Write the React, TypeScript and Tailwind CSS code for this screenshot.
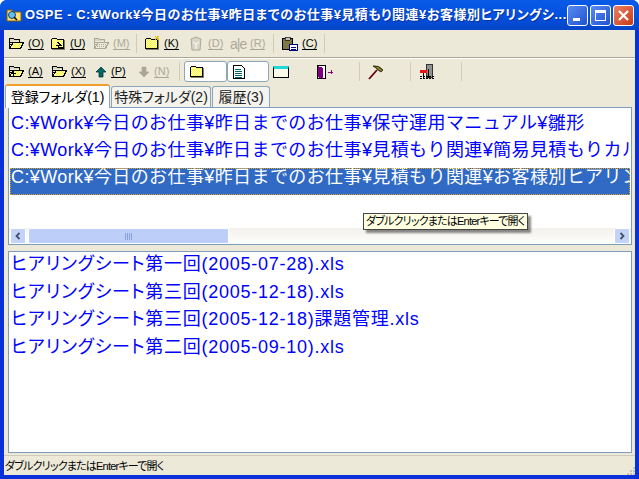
const jp = "font-['Liberation_Sans','Noto_Sans_CJK_JP',sans-serif] [font-feature-settings:'palt']";

function Dither() {
  return (
    <defs>
      <pattern id="dither" width="2" height="2" patternUnits="userSpaceOnUse">
        <rect width="2" height="2" fill="#ffff00" />
        <rect width="1" height="1" fill="#ffffff" />
        <rect x="1" y="1" width="1" height="1" fill="#ffffff" />
      </pattern>
      <pattern id="ditherDim" width="2" height="2" patternUnits="userSpaceOnUse">
        <rect width="2" height="2" fill="#ece9d8" />
        <rect width="1" height="1" fill="#aca899" />
      </pattern>
    </defs>
  );
}

function Folder({ open = false, dim = false, extra }: { open?: boolean; dim?: boolean; extra?: "up" | "new" | "plus" }) {
  const stroke = dim ? "#aca899" : "#000";
  const fill = dim ? "url(#ditherDim)" : "url(#dither)";
  return (
    <svg width="16" height="15" viewBox="0 0 16 15" shapeRendering="crispEdges" className="shrink-0">
      <Dither />
      {open ? (
        <>
          <path d="M1.500 4.500V2.500h4l1 1h5v2" fill={dim ? "#d8d5c8" : "#d8d8c0"} stroke={stroke} />
          <path d="M1.500 4v8.500" stroke={stroke} />
          <path d="M5.500 6.500h10l-3 6h-11z" fill={fill} stroke={stroke} />
          <path d="M2 6h3M2 8h2M2 10h1" stroke={stroke} />
        </>
      ) : (
        <>
          <path d="M1.500 3.500l1-1h4l1 1h6v9h-12z" fill={fill} stroke={stroke} />
          <path d="M2 13.500h13M14.500 4v9" stroke={dim ? "#ece9d8" : "#808060"} />
        </>
      )}
      {extra === "up" && <path d="M7.500 6l3 3h-2v2h4M6 9h1.500" fill="none" stroke="#000" />}
      {extra === "new" && <path d="M13 0v4M11 2h4M11 0l4 4M15 0l-4 4" stroke="#e0c000" />}
      {extra === "plus" && <path d="M5 7v5M3 9h5" stroke="#000" />}
    </svg>
  );
}

function Key({ k, dim = false }: { k: string; dim?: boolean }) {
  return (
    <span
      className={`text-[11px] leading-[12px] h-[13px] border-b ml-[4px] ${dim ? "text-[#aca899] border-[#aca899]" : "text-black border-black"}`}
    >
      ({k})
    </span>
  );
}

function Tool({ w, icon, k, dim }: { w: string; icon: React.ReactNode; k?: string; dim?: boolean }) {
  return (
    <div className={`${w} h-[22px] flex items-center shrink-0`}>
      {icon}
      {k && <Key k={k} dim={dim} />}
    </div>
  );
}

const Sep = () => <div className="w-px h-[19px] bg-[#cfcbb8] shrink-0" />;

function Arrow({ up, dim }: { up?: boolean; dim?: boolean }) {
  return (
    <svg width="12" height="12" viewBox="0 0 12 12" className="shrink-0">
      <path
        d={up ? "M6 1l5 5H8v5H4V6H1z" : "M6 11l5-5H8V1H4v5H1z"}
        fill={dim ? "#aca899" : "#006868"}
        stroke={dim ? "#aca899" : "#00292a"}
        strokeWidth="0.7"
      />
    </svg>
  );
}

function Pill({ w, children }: { w: string; children: React.ReactNode }) {
  return (
    <div className={`${w} h-[21px] bg-white border border-[#8da6b8] rounded-[3px] flex items-center pl-[4px] shrink-0`}>
      {children}
    </div>
  );
}

function Tab({ label, active, w }: { label: string; active?: boolean; w: string }) {
  return (
    <div
      className={`${w} shrink-0 rounded-t-[3px] text-[14px] whitespace-nowrap flex items-center justify-center ${
        active
          ? "h-[24px] bg-white border-t-[2px] border-t-[#f0a030] border-x border-x-[#8da6b8] text-black relative z-10 mb-[-1px]"
          : "h-[21px] bg-[#f4f3ee] border border-b-0 border-[#8da6b8] text-[#222]"
      }`}
    >
      {label}
    </div>
  );
}

const paths = [
  "C:¥Work¥今日のお仕事¥昨日までのお仕事¥保守運用マニュアル¥雛形",
  "C:¥Work¥今日のお仕事¥昨日までのお仕事¥見積もり関連¥簡易見積もりカルテ",
  "C:¥Work¥今日のお仕事¥昨日までのお仕事¥見積もり関連¥お客様別ヒアリングシート",
];

const files = [
  "ヒアリングシート第一回(2005-07-28).xls",
  "ヒアリングシート第三回(2005-12-18).xls",
  "ヒアリングシート第三回(2005-12-18)課題管理.xls",
  "ヒアリングシート第二回(2005-09-10).xls",
];

const status = "ダブルクリックまたはEnterキーで開く";

export default function App() {
  return (
    <div className={`${jp} w-[639px] h-[479px] relative overflow-hidden flex flex-col bg-[#0831d9] rounded-t-[7px]`}>
      {/* title bar */}
      <div className="h-[30px] shrink-0 flex items-center pl-[6px] pr-[5px] bg-gradient-to-b from-[#0a5ae8] via-[#0450df] to-[#0445c8]">
        <svg width="16" height="16" viewBox="0 0 16 16" className="shrink-0">
          <path d="M1 3h5l1 2h8v9H1z" fill="#ffe070" stroke="#806000" />
          <circle cx="6" cy="8" r="3.500" fill="#60c0f0" stroke="#204080" />
          <path d="M8 10l3 3" stroke="#000" strokeWidth="1.500" />
        </svg>
        <div className="ml-[3px] text-white font-bold text-[13px] tracking-[0.5px] whitespace-nowrap w-[530px] [text-shadow:1px_1px_0_#0330a0]">
          OSPE - C:¥Work¥今日のお仕事¥昨日までのお仕事¥見積もり関連¥お客様別ヒアリングシ...
        </div>
        <div className="ml-auto flex gap-[2px]">
          <div className="w-[21px] h-[21px] rounded-[3px] border border-white bg-gradient-to-br from-[#5a8cf0] to-[#2050d0] flex items-end pl-[5px] pb-[4px]">
            <div className="w-[7px] h-[3px] bg-white" />
          </div>
          <div className="w-[21px] h-[21px] rounded-[3px] border border-white bg-gradient-to-br from-[#5a8cf0] to-[#2050d0] flex items-center justify-center">
            <div className="w-[11px] h-[11px] border border-white border-t-[3px]" />
          </div>
          <div className="w-[21px] h-[21px] rounded-[3px] border border-white bg-gradient-to-br from-[#e88060] to-[#c83810] flex items-center justify-center">
            <svg width="13" height="13" viewBox="0 0 13 13">
              <path d="M2 2l9 9M11 2l-9 9" stroke="#fff" strokeWidth="2.200" />
            </svg>
          </div>
        </div>
      </div>

      {/* client */}
      <div className="flex-1 min-h-0 mx-[4px] mb-[4px] bg-[#ece9d8] flex flex-col">
        {/* toolbar 1 */}
        <div className="h-[28px] shrink-0 flex items-center pl-[4px] border-b border-b-[#aca899]">
          <Tool w="w-[42px]" icon={<Folder open />} k="O" />
          <Tool w="w-[43px]" icon={<Folder extra="up" />} k="U" />
          <Tool w="w-[43px]" icon={<Folder open dim />} k="M" dim />
          <Sep />
          <div className="w-[7px] shrink-0" />
          <Tool w="w-[44px]" icon={<Folder extra="new" />} k="K" />
          <Tool
            w="w-[42px]"
            icon={
              <svg width="16" height="16" viewBox="0 0 16 16" className="shrink-0">
                <path d="M3 3l5-2 5 2-1 11H4z" fill="#d8d5c8" stroke="#aca899" />
                <path d="M5 6l3 2 3-2M8 8v5" fill="none" stroke="#fff" />
              </svg>
            }
            k="D"
            dim
          />
          <Tool w="w-[43px]" icon={<span className="text-[14px] w-[16px] leading-none text-[#aca899] tracking-[-1px]">a|e</span>} k="R" dim />
          <Sep />
          <div className="w-[7px] shrink-0" />
          <Tool
            w="w-[43px]"
            icon={
              <svg width="17" height="16" viewBox="0 0 17 16" shapeRendering="crispEdges" className="shrink-0">
                <path d="M1.500 2.500h10v11h-10z" fill="#807840" stroke="#000" />
                <path d="M4 1h5v3H4z" fill="#c0c0c0" stroke="#000" strokeWidth="0.600" />
                <path d="M8.500 8.500h8v6h-8z" fill="#fff" stroke="#000080" />
                <path d="M10 11h5M10 13h5" stroke="#000080" />
              </svg>
            }
            k="C"
          />
          <Sep />
        </div>

        {/* toolbar 2 */}
        <div className="h-[26px] shrink-0 flex items-center pl-[4px] border-t border-t-white">
          <Tool w="w-[43px]" icon={<Folder open extra="plus" />} k="A" />
          <Tool w="w-[44px]" icon={<Folder open />} k="X" />
          <Tool w="w-[43px]" icon={<Arrow up />} k="P" />
          <Tool w="w-[41px]" icon={<Arrow dim />} k="N" dim />
          <Sep />
          <div className="w-[4px] shrink-0" />
          <Pill w="w-[43px]">
            <Folder />
          </Pill>
          <Pill w="w-[42px]">
            <svg width="14" height="16" viewBox="0 0 14 16" shapeRendering="crispEdges">
              <path d="M1.500 1.500h8l3 3v10h-11z" fill="#fff" stroke="#000" />
              <path d="M3 5h6M3 7h7M3 9h7M3 11h7M3 13h7" stroke="#006868" />
            </svg>
          </Pill>
          <div className="w-[4px] shrink-0" />
          <div className="w-[16px] h-[12px] border border-black bg-[#fbf9e8] border-t-[3px] border-t-[#20d8d8] shrink-0" />
          <div className="w-[28px] shrink-0" />
          <svg width="16" height="16" viewBox="0 0 16 16" className="shrink-0" shapeRendering="crispEdges">
            <path d="M0.500 1.500h8v13h-8z" fill="#fff" stroke="#000" />
            <path d="M1 2l5 2v11l-5-2z" fill="#800080" />
            <path d="M11 8h5M14 6v4" stroke="#800080" />
          </svg>
          <div className="w-[26px] shrink-0" />
          <Sep />
          <div className="w-[8px] shrink-0" />
          <svg width="16" height="16" viewBox="0 0 16 16" className="shrink-0">
            <path d="M1 15L9 6" stroke="#600010" strokeWidth="1.800" />
            <path d="M5 2q6-1 10 4l-2 2-3-2-2-2z" fill="#808020" stroke="#000" strokeWidth="0.700" />
          </svg>
          <div className="w-[26px] shrink-0" />
          <Sep />
          <div className="w-[8px] shrink-0" />
          <svg width="16" height="17" viewBox="0 0 16 17" className="shrink-0" shapeRendering="crispEdges">
            <path d="M7.500 1.500h6v13h-6z" fill="#909090" stroke="#333" />
            <path d="M1 7h7v3H1z" fill="#f01010" />
            <path d="M1 13h14M1 15h14" stroke="#000" strokeDasharray="2 1" />
            <path d="M4.500 10v5M9.500 6v9" stroke="#000" />
          </svg>
          <div className="w-[26px] shrink-0" />
          <Sep />
        </div>

        {/* tabs */}
        <div className="h-[23px] shrink-0 flex items-end pl-[1px] gap-[1px] relative">
          <Tab label="登録フォルダ(1)" active w="w-[105px]" />
          <Tab label="特殊フォルダ(2)" w="w-[100px]" />
          <Tab label="履歴(3)" w="w-[58px]" />
        </div>

        {/* upper list */}
        <div className="h-[138px] shrink-0 ml-[4px] mr-[3px] bg-white border border-[#7f9db9] flex flex-col">
          <div className="flex-1 min-h-0 overflow-hidden pt-[6px] px-[1px]">
            {paths.map((p, i) => (
              <div
                key={i}
                className={`h-[27px] pl-[1px] text-[18px] leading-[18px] tracking-[0.4px] [font-feature-settings:normal] whitespace-nowrap overflow-hidden ${
                  i === 2
                    ? "bg-[#316ac5] text-white outline-1 outline-dotted outline-[#e0a020] -outline-offset-1"
                    : "text-[#0000ff]"
                }`}
              >
                {p}
              </div>
            ))}
          </div>
          <div className="h-[16px] shrink-0 flex bg-gradient-to-b from-[#f3f1ec] to-[#fefefb]">
            <div className="w-[16px] h-[16px] ml-px rounded-[2px] border border-white bg-[#c3d3f8] flex items-center justify-center">
              <svg width="8" height="8" viewBox="0 0 8 8">
                <path d="M5.500 1L2.500 4l3 3" fill="none" stroke="#44506c" strokeWidth="1.800" />
              </svg>
            </div>
            <div className="w-[201px] h-[16px] ml-[2px] rounded-[2px] border border-white bg-[#bdcff8] flex items-center justify-center gap-px">
              {[0, 1, 2, 3].map((n) => (
                <div key={n} className="w-px h-[7px] bg-[#8aa0d8]" />
              ))}
            </div>
            <div className="w-[16px] h-[16px] ml-auto mr-px rounded-[2px] border border-white bg-[#c3d3f8] flex items-center justify-center">
              <svg width="8" height="8" viewBox="0 0 8 8">
                <path d="M2.500 1l3 3-3 3" fill="none" stroke="#44506c" strokeWidth="1.800" />
              </svg>
            </div>
          </div>
        </div>

        <div className="h-[6px] shrink-0" />

        {/* lower list */}
        <div className="h-[202px] shrink-0 ml-[4px] mr-[3px] bg-white border border-[#7f9db9] pt-[3px] px-[1px]">
          {files.map((f) => (
            <div key={f} className="h-[27.500px] pl-[1px] text-[18px] leading-[18px] tracking-[0.75px] text-[#0000ff] whitespace-nowrap">
              {f}
            </div>
          ))}
        </div>

        {/* status bar */}
        <div className="flex-1 min-h-0 mt-[2px] border-t border-t-[#cfcbb8] flex items-center pl-[1px] pt-[1px] text-[11px] tracking-[-0.8px] text-black relative">
          {status}
          <div className="absolute right-0 bottom-0 grid grid-cols-3 gap-px">
            {[0, 0, 1, 0, 1, 1, 1, 1, 1].map((on, i) => (
              <div key={i} className={`w-[2px] h-[2px] ${on ? "bg-[#c8c4b0]" : ""}`} />
            ))}
          </div>
        </div>
      </div>

      {/* tooltip */}
      <div className="absolute left-[363px] top-[213px] h-[17px] w-[165px] bg-[#ffffe1] border border-[#444] text-[11px] tracking-[-0.8px] leading-[15px] pl-[2px] whitespace-nowrap shadow-[3px_3px_2px_rgba(0,0,0,0.45)] text-black">
        {status}
      </div>
    </div>
  );
}
